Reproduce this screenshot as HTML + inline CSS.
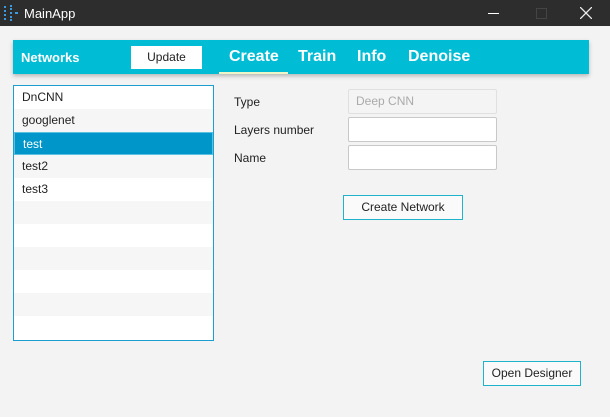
<!DOCTYPE html><html><head><style>
body{margin:0;width:610px;height:417px;background:#f3f3f3;font-family:"Liberation Sans",sans-serif;font-size:12px;position:relative;overflow:hidden;color:#222}
.a{position:absolute}
.tb{left:0;top:0;width:610px;height:26px;background:#2d2d2d;color:#fff}
.bar{left:13px;top:40px;width:576px;height:34px;background:#00bcd4;box-shadow:0 2px 4px rgba(0,0,0,.25)}
.tab{top:48px;color:#fff;font-weight:bold;font-size:16px}
.list{left:13px;top:85px;width:199px;height:254px;border:1px solid #1d9dd0;background:#fff}
.row{height:23px;line-height:23px;padding-left:8px;box-sizing:border-box}
.row:nth-child(even){background:#f6f6f6}
.in{left:348px;width:147px;height:23px;border:1px solid #c8c8c8;border-radius:2px;background:#fff}
.btn{border:1px solid #1eb3c8;background:#fafafa;text-align:center;line-height:23px}
</style></head><body>
<div class="a tb">
<div class="a" style="left:4px;top:6px;width:2px;height:14px;border-left:2px dotted #3a9be0"></div>
<div class="a" style="left:10px;top:5px;width:2px;height:16px;border-left:2px dotted #3a9be0"></div>
<div class="a" style="left:15px;top:12px;width:3px;height:2px;background:#3a9be0"></div>
<div class="a" style="left:24px;top:6px;font-size:13px">MainApp</div>
<div class="a" style="left:488px;top:13px;width:11px;height:1px;background:#fff"></div>
<div class="a" style="left:536px;top:8px;width:9px;height:9px;border:1px solid #444"></div>
<svg class="a" style="left:580px;top:7px" width="12" height="12"><path d="M0 0L12 12M12 0L0 12" stroke="#eee" stroke-width="1.3"/></svg>
</div>
<div class="a bar"></div>
<div class="a" style="left:21px;top:50px;color:#fff;font-weight:bold;font-size:13px">Networks</div>
<div class="a" style="left:131px;top:46px;width:71px;height:23px;background:#fff;text-align:center;line-height:23px;font-size:12px">Update</div>
<div class="a tab" style="left:229px">Create</div>
<div class="a" style="left:219px;top:72px;width:69px;height:2px;background:#eef6c8"></div>
<div class="a tab" style="left:298px">Train</div>
<div class="a tab" style="left:357px">Info</div>
<div class="a tab" style="left:408px">Denoise</div>
<div class="a list">
<div class="row">DnCNN</div><div class="row">googlenet</div>
<div class="row" style="background:#0096c9;color:#fff;border:1px solid #5cc0e0">test</div>
<div class="row">test2</div><div class="row">test3</div><div class="row"></div><div class="row"></div><div class="row"></div><div class="row"></div><div class="row"></div><div class="row"></div>
</div>
<div class="a" style="left:234px;top:95px">Type</div>
<div class="a" style="left:234px;top:123px">Layers number</div>
<div class="a" style="left:234px;top:151px">Name</div>
<div class="a in" style="top:89px;background:#f4f4f4;border-color:#e0e0e0;color:#aaa;line-height:23px;padding-left:7px;box-sizing:border-box;height:25px;width:149px">Deep CNN</div>
<div class="a in" style="top:117px"></div>
<div class="a in" style="top:145px"></div>
<div class="a btn" style="left:343px;top:195px;width:118px">Create Network</div>
<div class="a btn" style="left:483px;top:361px;width:96px">Open Designer</div>
</body></html>
